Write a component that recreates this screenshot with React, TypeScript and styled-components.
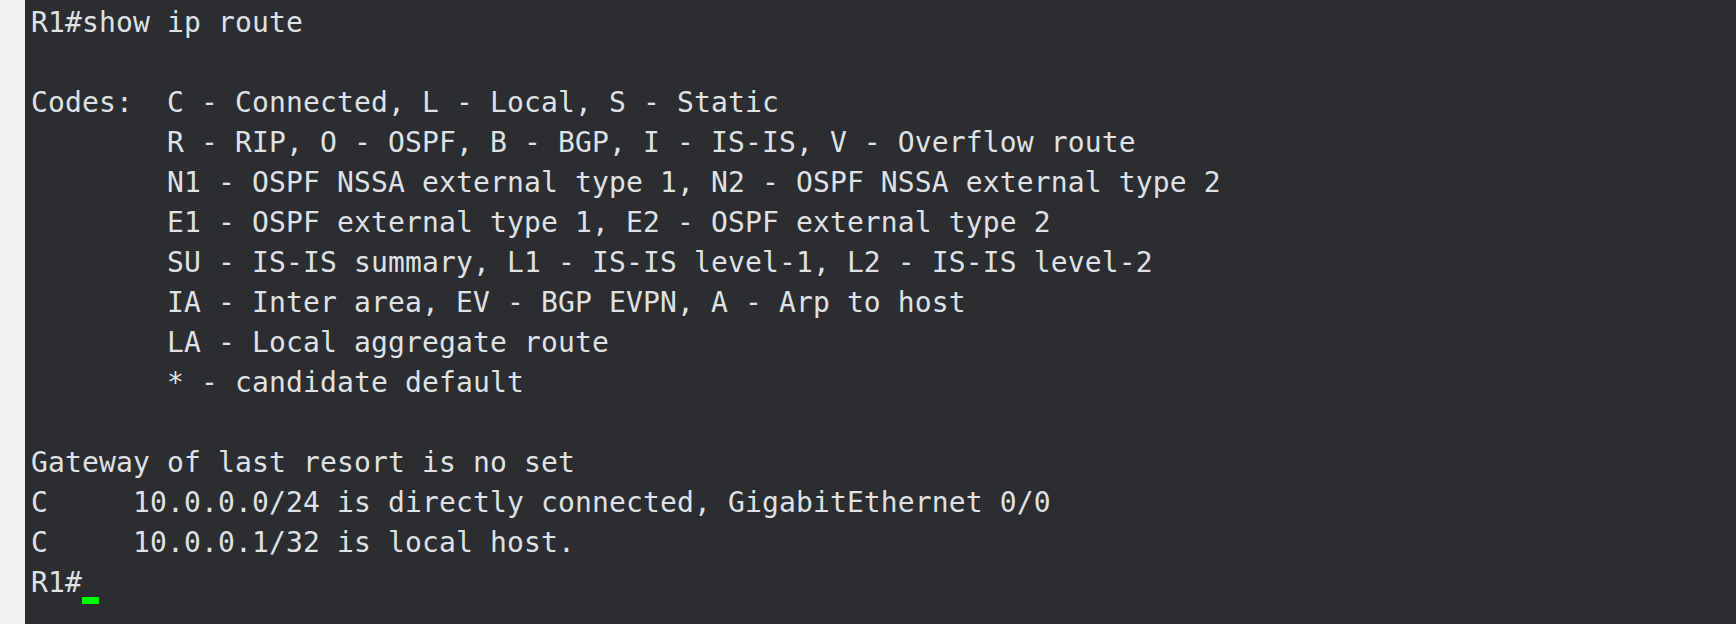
import React from "react";
import styled, { createGlobalStyle } from "styled-components";

const GlobalStyle = createGlobalStyle`
  html, body {
    margin: 0;
    padding: 0;
    background: #f2f2f2;
  }
  #root {
    height: 624px;
  }
`;

const Page = styled.div`
  display: flex;
  width: 1736px;
  height: 624px;
  overflow: hidden;
  background: #f2f2f2;
`;

const Gutter = styled.div`
  width: 25px;
  flex: none;
  background: #f2f2f2;
`;

const Terminal = styled.pre`
  flex: 1;
  margin: 0;
  padding: 3px 0 0 6px;
  background: #2b2d30;
  color: #dfe1e5;
  font-family: "DejaVu Sans Mono", "Liberation Mono", monospace;
  font-size: 28px;
  letter-spacing: 0.14px;
  line-height: 40px;
  white-space: pre;
  overflow: hidden;
`;

const Line = styled.div`
  height: 40px;
`;

const Cursor = styled.span`
  display: inline-block;
  width: 17px;
  height: 7px;
  background: #00ff00;
  vertical-align: -12px;
`;

const lines = [
  "R1#show ip route",
  "",
  "Codes:  C - Connected, L - Local, S - Static",
  "        R - RIP, O - OSPF, B - BGP, I - IS-IS, V - Overflow route",
  "        N1 - OSPF NSSA external type 1, N2 - OSPF NSSA external type 2",
  "        E1 - OSPF external type 1, E2 - OSPF external type 2",
  "        SU - IS-IS summary, L1 - IS-IS level-1, L2 - IS-IS level-2",
  "        IA - Inter area, EV - BGP EVPN, A - Arp to host",
  "        LA - Local aggregate route",
  "        * - candidate default",
  "",
  "Gateway of last resort is no set",
  "C     10.0.0.0/24 is directly connected, GigabitEthernet 0/0",
  "C     10.0.0.1/32 is local host.",
];

export default function App() {
  return (
    <Page>
      <GlobalStyle />
      <Gutter />
      <Terminal>
        {lines.map((l, i) => (
          <Line key={i}>{l}</Line>
        ))}
        <Line>
          R1#<Cursor />
        </Line>
      </Terminal>
    </Page>
  );
}
